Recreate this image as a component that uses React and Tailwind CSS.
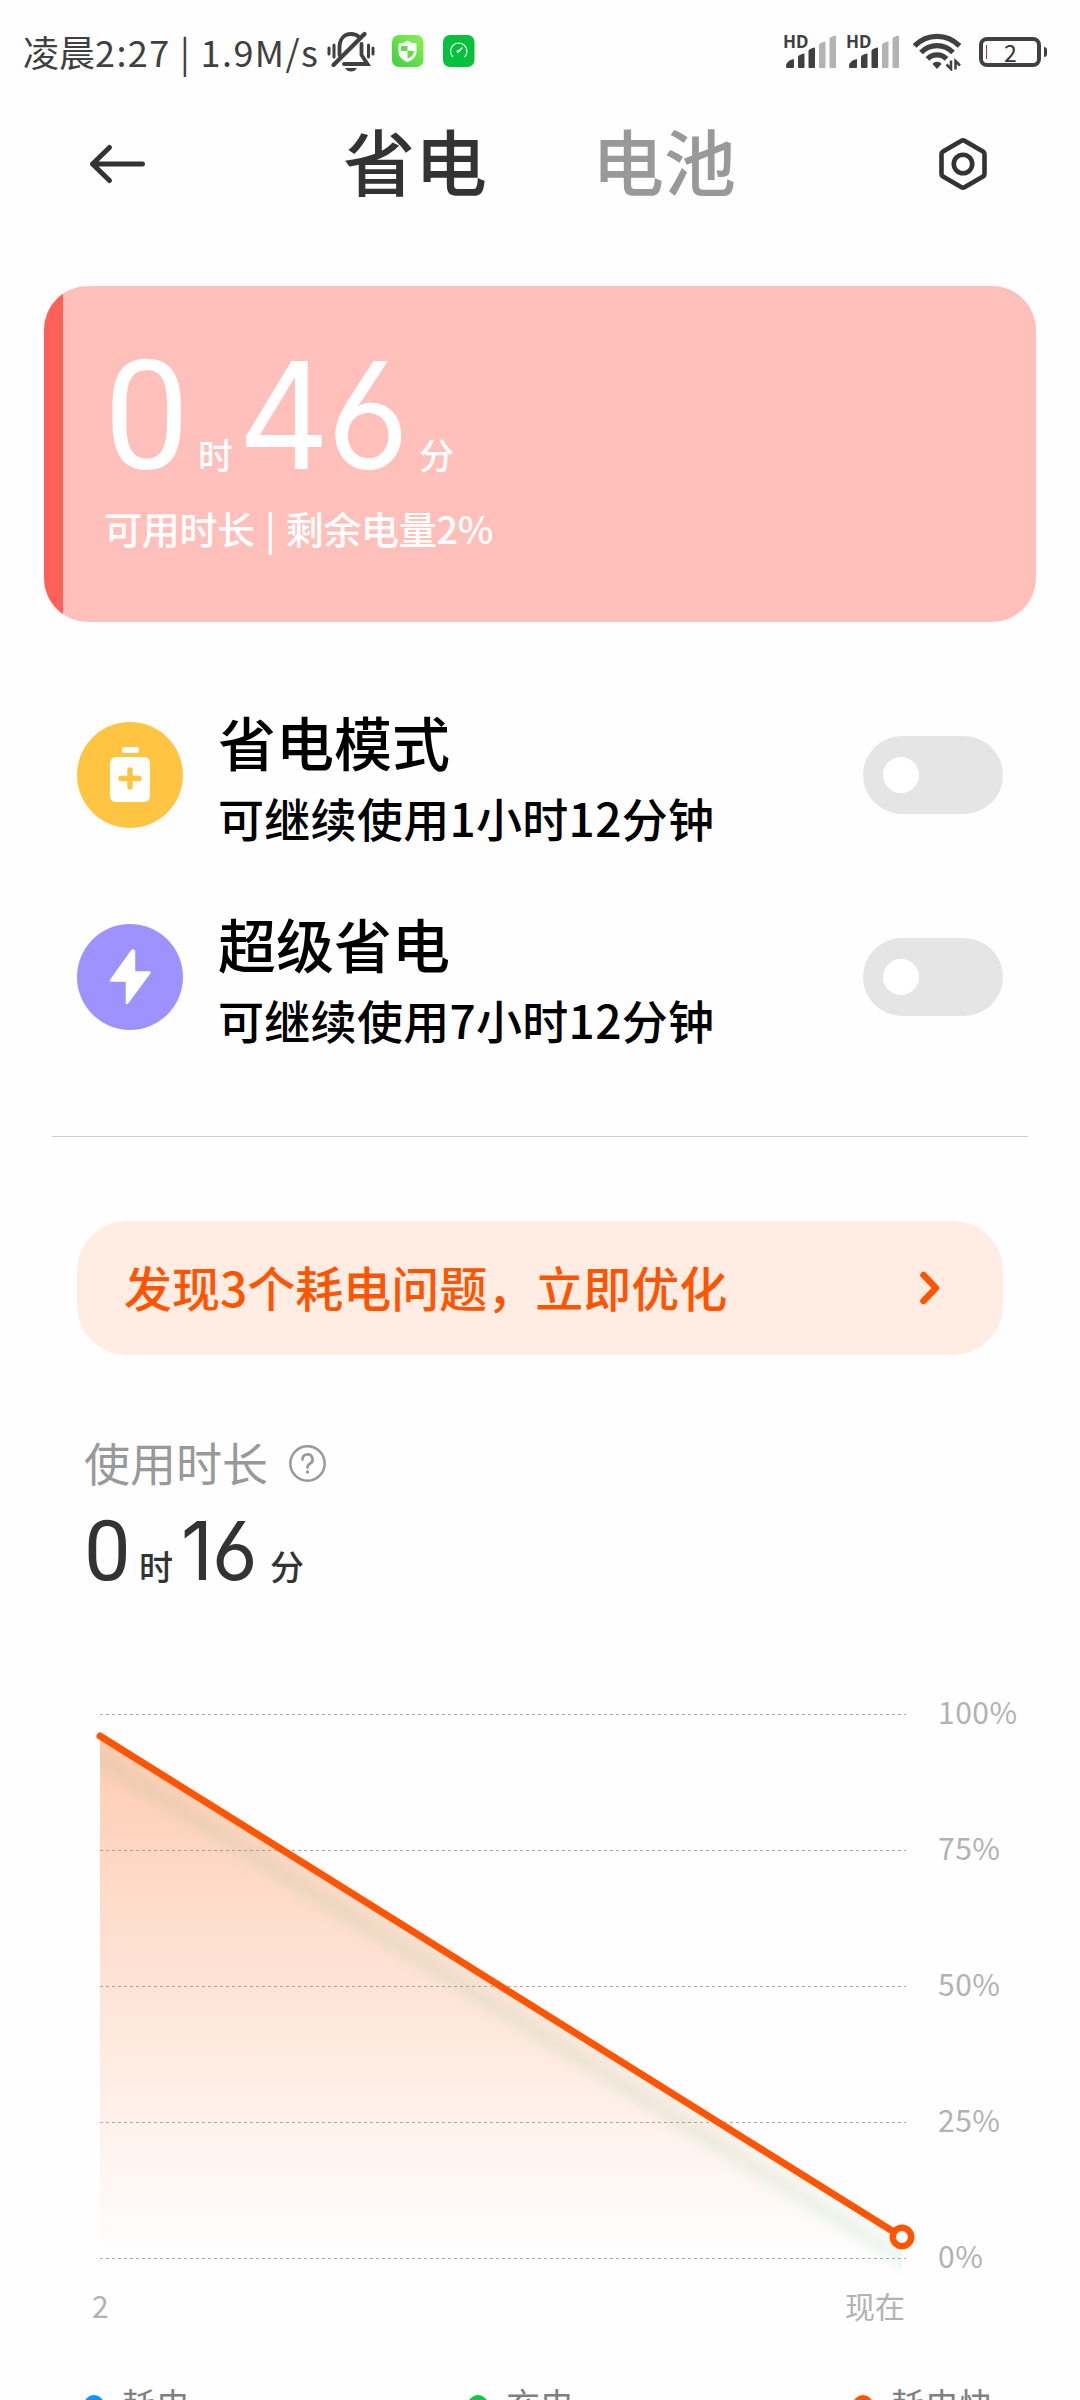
import { useState } from 'react';

const LEVELS = ['100%', '75%', '50%', '25%', '0%'];

const MODES = [
  { id: 'saver', title: '省电模式', desc: '可继续使用1小时12分钟', color: 'bg-[#ffc542]', Icon: BatteryPlusIcon },
  { id: 'ultra', title: '超级省电', desc: '可继续使用7小时12分钟', color: 'bg-[#9d92ff]', Icon: BoltIcon },
];

function BatteryPlusIcon() {
  return (
    <svg width="106" height="106" viewBox="0 0 106 106">
      <rect x="45" y="25" width="17" height="6" rx="2.5" fill="#fff" />
      <rect x="33" y="35" width="40" height="45" rx="6" fill="#fff" />
      <path d="M53 48v17M44 56.5h18" stroke="#ffc542" strokeWidth="5.5" strokeLinecap="round" />
    </svg>
  );
}

function BoltIcon() {
  return (
    <svg width="106" height="106" viewBox="0 0 106 106">
      <path d="M55.5 26.5L34 56.5h16v22.5L72.5 48.5H57V27z" fill="#fff" stroke="#fff" strokeWidth="2.5" strokeLinejoin="round" />
    </svg>
  );
}

function MutedBell() {
  return (
    <svg width="48" height="42" viewBox="0 0 48 42" fill="none" stroke="#404040" strokeWidth="3.8" strokeLinecap="round">
      <path d="M12.5 24V17C12.5 8 17 3 24 3c3.5 0 6 1 8 3" />
      <path d="M34.5 13v11l6 9H17" />
      <path d="M37.5 3L6.5 34" strokeWidth="4.2" />
      <path d="M2 17v6M7 14v12M41.5 14v12M46 17v6" strokeWidth="3" />
      <path d="M18 37h12c-1.5 2.5-3.5 3.5-6 3.5s-4.5-1-6-3.5z" fill="#404040" stroke="none" />
    </svg>
  );
}

function ShieldBadge() {
  return (
    <svg width="32" height="32" viewBox="0 0 32 32">
      <defs>
        <linearGradient id="shieldBg" x1="1" y1="0" x2="0" y2="1">
          <stop offset="0" stopColor="#8df054" />
          <stop offset="1" stopColor="#3fcf43" />
        </linearGradient>
      </defs>
      <rect width="31.5" height="32" rx="7" fill="url(#shieldBg)" />
      <path d="M15.5 5.5c2.5 2 5.5 3 9 3v8c0 5-3.5 8.5-9 10.5-5.5-2-9-5.5-9-10.5v-8c3.5 0 6.500-1 9-3z" fill="#fff" />
      <path d="M9 11h6.5v5H9zM15.5 16H22c0 3.5-2.5 6-6.5 7.5z" fill="#62dc49" />
    </svg>
  );
}

function GaugeBadge() {
  return (
    <svg width="32" height="32" viewBox="0 0 32 32" fill="none" stroke="#fff" strokeLinecap="round">
      <rect width="31.5" height="32" rx="7" fill="#05c13c" stroke="none" />
      <path d="M9.5 21.5a8.2 8.2 0 1 1 12.5 0" strokeWidth="1.2" />
      <path d="M15 17l4-4" strokeWidth="1.5" />
      <circle cx="15" cy="16.5" r="1" fill="#fff" />
    </svg>
  );
}

function Signal() {
  return (
    <div className="relative h-[36px] w-[54px]">
      <span className="absolute -left-px -top-[4px] font-['Noto_Sans'] text-[17px] font-bold leading-[24px]">HD</span>
      <svg width="54" height="36" viewBox="0 0 54 36">
        <g fill="#404040">
          <path d="M2 32c0-3 3-6 8-7v8q0 1-1 1H3q-1 0-1-1z" />
          <path d="M14 23c0-1.5 3-3 6.5-3.5V33q0 1-1 1H15q-1 0-1-1z" />
          <path d="M24.5 17c0-1.5 3-3 6.5-3.5V33q0 1-1 1h-4.5q-1 0-1-1z" />
        </g>
        <g fill="#b3b3b3">
          <path d="M35 11c0-1.5 3-3 6.5-3.5V33q0 1-1 1H36q-1 0-1-1z" />
          <path d="M45.5 5c0-1.5 3-3 6.5-3.5V33q0 1-1 1h-4.5q-1 0-1-1z" />
        </g>
      </svg>
    </div>
  );
}

function Wifi() {
  return (
    <svg width="48" height="38" viewBox="0 0 48 38" fill="none" stroke="#404040" strokeWidth="5.2">
      <path d="M1.5 13a31 31 0 0 1 45 0" />
      <path d="M8 19.5a22 22 0 0 1 32 0" />
      <path d="M14.5 26a13 13 0 0 1 19 0" />
      <path d="M24 36l-4.5-5c1-1.5 2.5-2.3 4.5-2.3s3.5.8 4.5 2.3z" fill="#404040" stroke="none" />
      <path d="M38 27.5V36l-4.5-4.500M42.5 36.5V28l4.5 4.5" strokeWidth="2.5" />
    </svg>
  );
}

function Battery() {
  return (
    <div className="flex items-center gap-[3px]">
      <div className="flex h-[30px] w-[62px] items-center rounded-[8px] border-4 border-[#404040] pl-[3px]">
        <span className="mr-[17px] h-[14px] w-px bg-[#c22f2f]" />
        <span className="text-[23px] leading-[22px] text-[#333]">2</span>
      </div>
      <div className="h-[10px] w-[3px] rounded-r bg-[#404040]" />
    </div>
  );
}

function StatusBar() {
  return (
    <div className="flex h-[104px] items-center pl-[23px] pr-[33px] text-[#404040]">
      <span className="-mt-[2px] w-[304px] whitespace-nowrap text-[36px] leading-[50px]">
        凌晨<span className="tracking-[1.4px]">2:27 | 1.9M/s</span>
      </span>
      <div className="flex items-center">
        <MutedBell />
        <div className="-mt-[2px] ml-[17px] flex gap-[19px]">
          <ShieldBadge />
          <GaugeBadge />
        </div>
      </div>
      <div className="ml-auto flex items-center">
        <div className="flex gap-[9px]">
          <Signal />
          <Signal />
        </div>
        <div className="ml-[12px] mr-[18px]">
          <Wifi />
        </div>
        <Battery />
      </div>
    </div>
  );
}

function Header({ tab, setTab }) {
  return (
    <header className="flex h-[120px] items-center pl-[88px] pr-[91px]">
      <button aria-label="返回">
        <svg width="58" height="44" viewBox="0 0 58 44" fill="none" stroke="#333" strokeWidth="5" strokeLinecap="round" strokeLinejoin="round">
          <path d="M54.5 22H4.5M21.5 5.5L4.5 22l17 16.5" />
        </svg>
      </button>
      <nav className="ml-[197px] flex gap-[105px] text-[72px] font-medium leading-[100px]">
        {['省电', '电池'].map((name) => (
          <button
            key={name}
            onClick={() => setTab(name)}
            className={`-mt-[10px] ${tab === name ? 'text-[#333]' : 'text-[#999]'}`}
          >
            {name}
          </button>
        ))}
      </nav>
      <button className="ml-auto" aria-label="设置">
        <svg width="52" height="56" viewBox="0 0 52 56" fill="none" stroke="#333" strokeWidth="4.6" strokeLinejoin="round">
          <path d="M24.5 4.8q1.5-.8 3 0L46 15.5q1.5.9 1.5 2.5v20q0 1.6-1.5 2.5L27.5 51.2q-1.5.8-3 0L6 40.5Q4.5 39.6 4.5 38V18q0-1.6 1.5-2.5z" />
          <circle cx="26" cy="28" r="9.2" />
        </svg>
      </button>
    </header>
  );
}

function RemainingCard() {
  return (
    <section className="mx-[44px] mt-[62px] flex h-[336px] overflow-hidden rounded-[44px] bg-[#ffc0bc] text-white">
      <div className="w-[19px] bg-[#ff6058]" />
      <div className="ml-[41px] pt-[55px]">
        <div className="flex h-[145px] items-baseline">
          <span className="w-[94px] font-[Roboto] text-[152px] leading-[150px]">0</span>
          <span className="w-[40px] text-[35px] font-medium leading-none">时</span>
          <span className="w-[181px] origin-left scale-x-[0.96] font-[Inter] text-[148px] leading-[150px] tracking-[-3px] [font-feature-settings:'cv03']">46</span>
          <span className="text-[35px] font-medium leading-none">分</span>
        </div>
        <p className="mt-[17px] text-[38px] font-medium leading-[50px] tracking-[-0.3px] [word-spacing:2px]">可用时长 | 剩余电量2%</p>
      </div>
    </section>
  );
}

function Toggle({ on, onChange }) {
  return (
    <button
      role="switch"
      aria-checked={on}
      onClick={onChange}
      className={`flex h-[78px] w-[140px] items-center rounded-full px-[20px] ${on ? 'justify-end bg-[#3482ff]' : 'bg-[#e5e5e5]'}`}
    >
      <span className="size-[36px] rounded-full bg-white" />
    </button>
  );
}

function ModeRow({ mode, on, onChange }) {
  const { title, desc, color, Icon } = mode;
  return (
    <div className="flex h-[202px] items-center px-[77px]">
      <div className={`size-[106px] rounded-full ${color}`}>
        <Icon />
      </div>
      <div className="ml-[35px] pt-[8px] text-black">
        <h2 className="text-[58px] font-medium leading-[76px]">{title}</h2>
        <p className="text-[46px] font-medium leading-[76px] tracking-[0.3px]">{desc}</p>
      </div>
      <div className="ml-auto">
        <Toggle on={on} onChange={onChange} />
      </div>
    </div>
  );
}

function IssueBanner() {
  return (
    <button className="mx-[77px] mt-[84px] flex h-[134px] w-[926px] items-center rounded-[50px] bg-[#ffede4] pl-[47px] pr-[59px] text-[#ff5500]">
      <span className="-mt-[5px] text-[48px] font-medium leading-[60px]">发现3个耗电问题，立即优化</span>
      <svg className="ml-auto" width="28" height="40" viewBox="0 0 28 40" fill="none" stroke="currentColor" strokeWidth="6.5" strokeLinecap="round" strokeLinejoin="round">
        <path d="M7.5 7L20 20 7.5 33" />
      </svg>
    </button>
  );
}

function UsageSummary() {
  return (
    <section className="mt-[76px] pl-[84px]">
      <div className="flex h-[60px] items-center gap-[20px] text-[#999]">
        <h3 className="text-[46px] leading-[60px]">使用时长</h3>
        <svg className="mt-[5px]" width="39" height="39" viewBox="0 0 39 39" fill="none" stroke="currentColor" strokeWidth="2.5" strokeLinecap="round">
          <circle cx="19.5" cy="19.5" r="17.2" />
          <path d="M14.5 15.5a5 5 0 1 1 7.5 4.2c-1.8 1-2.5 1.8-2.5 3.8" strokeWidth="2.7" />
          <circle cx="19.5" cy="28" r="1.7" fill="currentColor" stroke="none" />
        </svg>
      </div>
      <div className="mt-[20px] flex h-[77px] items-baseline text-[#333]">
        <span className="w-[55px] font-[Roboto] text-[83px] leading-[80px]">0</span>
        <span className="w-[42px] text-[34px] font-medium leading-none">时</span>
        <span className="w-[89px] origin-left scale-x-[0.97] font-[Inter] text-[81px] leading-[80px] tracking-[-1px] [font-feature-settings:'cv03']">16</span>
        <span className="text-[34px] font-medium leading-none">分</span>
      </div>
    </section>
  );
}

function BatteryChart() {
  return (
    <section className="mt-[111px]">
      <div className="flex">
        <svg className="ml-[80px] overflow-visible" width="858" height="574" viewBox="0 0 858 574">
          <defs>
            <linearGradient id="area" x1="0" y1="36" x2="0" y2="556" gradientUnits="userSpaceOnUse">
              <stop offset="0" stopColor="#ff5500" stopOpacity="0.3" />
              <stop offset="1" stopColor="#ff5500" stopOpacity="0" />
            </linearGradient>
            <filter id="soft" x="-10%" y="-10%" width="120%" height="120%">
              <feGaussianBlur stdDeviation="6" />
            </filter>
            <clipPath id="plot">
              <path d="M20 37L822 538V590H20z" />
            </clipPath>
          </defs>
          {LEVELS.map((level, i) => (
            <path key={level} d={`M20 ${15.5 + i * 136}H826`} stroke="#aaa" strokeDasharray="3 3" />
          ))}
          <path d="M20 37L822 538V556H20z" fill="url(#area)" />
          <g clipPath="url(#plot)">
            <path d="M4 51L836 568" stroke="#2fa84f" strokeOpacity="0.1" strokeWidth="14" filter="url(#soft)" />
          </g>
          <path d="M20 37L822 538" stroke="#ff5500" strokeWidth="7" strokeLinecap="round" />
          <circle cx="822" cy="538" r="9.2" fill="#fff" stroke="#ff5500" strokeWidth="6.5" />
        </svg>
        <div className="flex flex-col gap-[106px] text-[30px] leading-[30px] tracking-[0.5px] text-[#b2b2b2]">
          {LEVELS.map((level) => (
            <span key={level} className="-mt-[3px] mb-[3px] h-[30px]">{level}</span>
          ))}
        </div>
      </div>
      <div className="mt-[17px] flex justify-between pl-[92px] pr-[175px] text-[30px] leading-[30px] text-[#b2b2b2]">
        <span>2</span>
        <span>现在</span>
      </div>
    </section>
  );
}

function Legend() {
  const items = [
    ['耗电', 'bg-[#0d94ff]', 'w-[384px]'],
    ['充电', 'bg-[#10c64a]', 'w-[385px]'],
    ['耗电快', 'bg-[#ff5500]', ''],
  ];
  return (
    <div className="mt-[64px] flex pl-[84px] text-[34px] leading-[40px] text-[#808080]">
      {items.map(([label, dot, width]) => (
        <div key={label} className={`flex items-center gap-[18px] ${width}`}>
          <span className={`mt-[2px] size-[20px] rounded-full ${dot}`} />
          <span>{label}</span>
        </div>
      ))}
    </div>
  );
}

export default function App() {
  const [tab, setTab] = useState('省电');
  const [enabled, setEnabled] = useState({ saver: false, ultra: false });

  return (
    <div className="h-[2400px] w-[1080px] overflow-hidden bg-[#fefefe] font-['Noto_Sans_CJK_SC',sans-serif]">
      <StatusBar />
      <Header tab={tab} setTab={setTab} />
      <RemainingCard />
      <div className="mt-[52px]">
        {MODES.map((mode) => (
          <ModeRow
            key={mode.id}
            mode={mode}
            on={enabled[mode.id]}
            onChange={() => setEnabled({ ...enabled, [mode.id]: !enabled[mode.id] })}
          />
        ))}
      </div>
      <div className="mx-[52px] mt-[58px] h-px bg-[#ccc]" />
      <IssueBanner />
      <UsageSummary />
      <BatteryChart />
      <Legend />
    </div>
  );
}
